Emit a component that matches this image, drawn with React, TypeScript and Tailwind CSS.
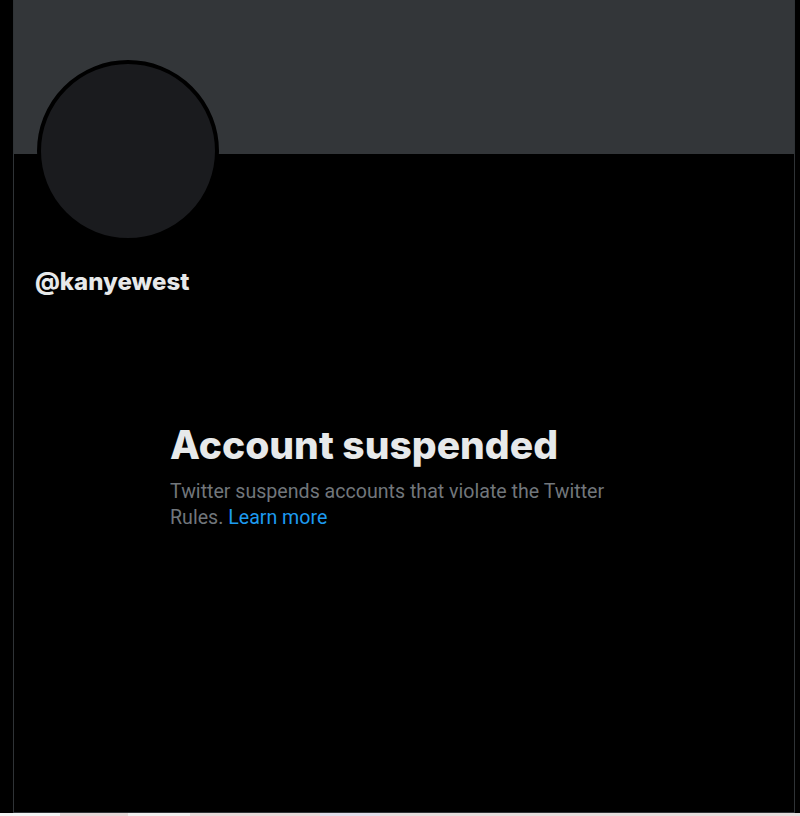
const App = () => {
  return (
    <div className="flex flex-col h-[816px] w-[800px] bg-black overflow-hidden" style={{ fontFamily: 'Roboto, "Liberation Sans", Arial, sans-serif' }}>
      <div className="flex h-[813px]">
        <div className="w-[13px] bg-black" />
        <div className="flex w-[782px] flex-col border-x border-b border-[#2f3336] bg-black">
          <div className="h-[154px] w-full bg-[#333639]" />
          <div className="-mt-[94px] ml-[23px] h-[182px] w-[182px] rounded-full border-4 border-black bg-[#1a1b1e]" />
          <div className="mt-[26px] pl-[21px] font-['Inter',sans-serif] text-[24px] leading-[28px] font-extrabold text-[#e7e9ea]">@kanyewest</div>
          <div className="mt-[125px] pl-[156px]">
            <h1 className="font-['Inter',sans-serif] text-[39px] leading-[48px] font-extrabold text-[#e7e9ea]">Account suspended</h1>
            <p className="mt-[10px] w-[450px] text-[19.6px] leading-[26px] text-[#71767b]">
              Twitter suspends accounts that violate the Twitter Rules.{" "}
              <a className="text-[#1d9bf0]">Learn more</a>
            </p>
          </div>
        </div>
        <div className="flex-1 bg-black" />
      </div>
      <div className="flex h-[3px]">
        <div className="w-[60px] bg-[#f4f4f4]" />
        <div className="w-[68px] bg-[#e6d6d6]" />
        <div className="w-[62px] bg-[#f2eeee]" />
        <div className="w-[130px] bg-[#e8d8d8]" />
        <div className="w-[60px] bg-[#e2ddea]" />
        <div className="flex-1 bg-[#e6dcdc]" />
      </div>
    </div>
  );
};

export default App;
